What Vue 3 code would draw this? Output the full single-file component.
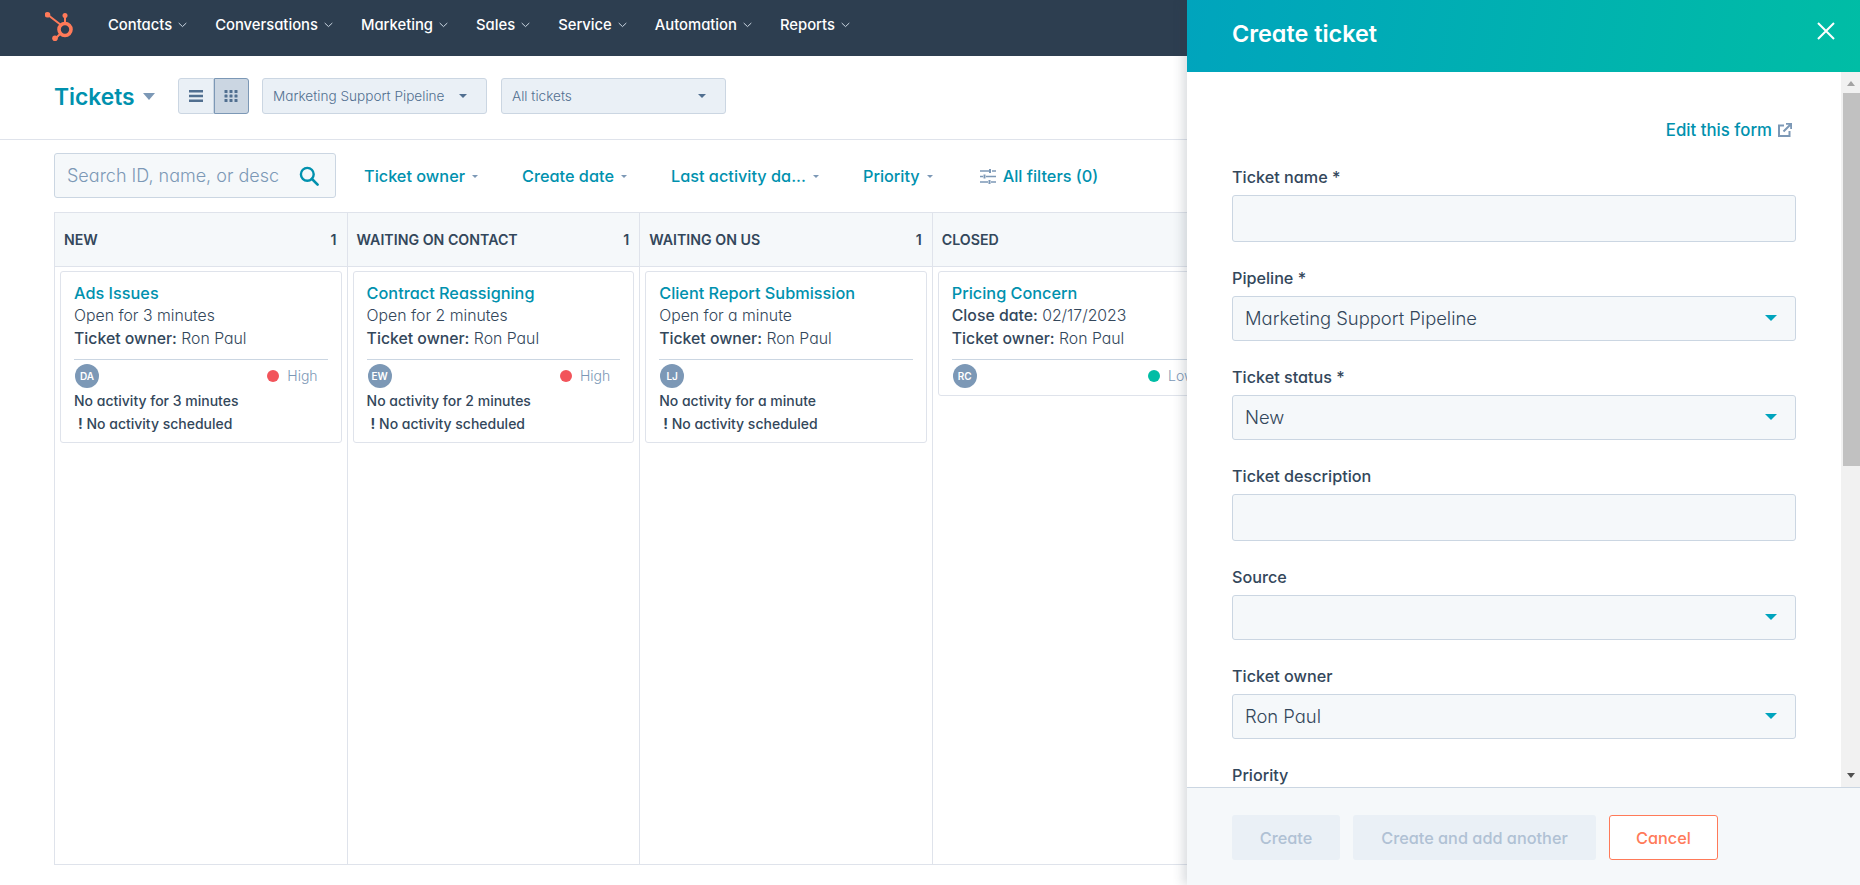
<script setup>
const navItems = ["Contacts", "Conversations", "Marketing", "Sales", "Service", "Automation", "Reports"];
const filters = ["Ticket owner", "Create date", "Last activity da...", "Priority"];

const columns = [
  {
    name: "NEW",
    count: 1,
    card: {
      title: "Ads Issues",
      open: "Open for 3 minutes",
      initials: "DA",
      priority: "High",
      idle: "No activity for 3 minutes",
    },
  },
  {
    name: "WAITING ON CONTACT",
    count: 1,
    card: {
      title: "Contract Reassigning",
      open: "Open for 2 minutes",
      initials: "EW",
      priority: "High",
      idle: "No activity for 2 minutes",
    },
  },
  {
    name: "WAITING ON US",
    count: 1,
    card: {
      title: "Client Report Submission",
      open: "Open for a minute",
      initials: "LJ",
      priority: "",
      idle: "No activity for a minute",
    },
  },
  {
    name: "CLOSED",
    count: 1,
    card: {
      title: "Pricing Concern",
      closeDate: "02/17/2023",
      initials: "RC",
      priority: "Low",
      idle: "",
    },
  },
];

const fields = [
  { label: "Ticket name *", type: "text", value: "" },
  { label: "Pipeline *", type: "select", value: "Marketing Support Pipeline" },
  { label: "Ticket status *", type: "select", value: "New" },
  { label: "Ticket description", type: "text", value: "" },
  { label: "Source", type: "select", value: "" },
  { label: "Ticket owner", type: "select", value: "Ron Paul" },
  { label: "Priority", type: "select", value: "" },
];
</script>

<template>
  <div class="page">
    <nav class="topnav">
      <svg class="logo" viewBox="45 12 30 32" width="30" height="32">
        <g fill="none" stroke="#ff7a59">
          <circle cx="65" cy="29.5" r="6" stroke-width="3.6" />
          <path d="M48 15l13 10M65 16v8M56 38l5-5" stroke-width="2" />
        </g>
        <g fill="#ff7a59">
          <circle cx="47.5" cy="14.8" r="2.8" />
          <circle cx="65" cy="15.5" r="2.5" />
          <circle cx="55" cy="38.3" r="2.8" />
        </g>
      </svg>
      <a v-for="item in navItems" :key="item" class="nav-item">
        {{ item }}
        <svg viewBox="0 0 9 6" width="9" height="6"><path d="M.7 1l3.8 3.6L8.3 1" fill="none" stroke="#cbd6e2" stroke-width="1" /></svg>
      </a>
    </nav>

    <header class="page-head">
      <h1 class="page-title">Tickets<span class="caret caret-title"></span></h1>
      <div class="view-toggle">
        <button type="button" class="toggle-btn">
          <svg viewBox="0 0 14 14" width="14" height="14"><path d="M0 1h14v2.6H0zM0 5.7h14v2.6H0zM0 10.4h14V13H0z" fill="#516f90" /></svg>
        </button>
        <button type="button" class="toggle-btn active">
          <svg viewBox="0 0 14 14" width="14" height="14" fill="#516f90">
            <template v-for="y in [1, 5.5, 10]" :key="y">
              <rect v-for="x in [0.5, 5.5, 10.5]" :key="x" :x="x" :y="y" width="3" height="3" rx=".6" />
            </template>
          </svg>
        </button>
      </div>
      <div class="head-select">Marketing Support Pipeline<span class="caret caret-small"></span></div>
      <div class="head-select">All tickets<span class="caret caret-small"></span></div>
    </header>

    <div class="filters">
      <div class="search">
        <span class="search-text">Search ID, name, or desc</span>
        <svg viewBox="0 0 20 20" width="20" height="20"><circle cx="8.3" cy="8.3" r="6.4" fill="none" stroke="#0091ae" stroke-width="2.4" /><path d="M13 13l5.6 5.6" stroke="#0091ae" stroke-width="2.6" stroke-linecap="round" /></svg>
      </div>
      <button v-for="f in filters" :key="f" type="button" class="filter-btn">
        {{ f }}<span class="caret caret-tiny"></span>
      </button>
      <button type="button" class="filter-btn all-filters">
        <svg viewBox="0 0 16 15" width="16" height="15"><path d="M0 2h9M12 2h4M0 7.500h3M6 7.500h10M0 13h8M11 13h5" stroke="#7c98b6" stroke-width="1.500" /><path d="M10 0v4M4.500 5.500v4M9.500 11v4" stroke="#7c98b6" stroke-width="2" /></svg>
        All filters (0)
      </button>
    </div>

    <section class="board">
      <div v-for="col in columns" :key="col.name" class="column">
        <div class="column-head">
          <span>{{ col.name }}</span>
          <span>{{ col.count }}</span>
        </div>
        <article class="card">
          <div class="card-top">
            <a class="card-title">{{ col.card.title }}</a>
            <p v-if="col.card.open">{{ col.card.open }}</p>
            <p v-if="col.card.closeDate"><b>Close date:</b> {{ col.card.closeDate }}</p>
            <p><b>Ticket owner:</b> Ron Paul</p>
          </div>
          <div class="card-meta">
            <span class="avatar">{{ col.card.initials }}</span>
            <span v-if="col.card.priority" class="priority">
              <i class="dot" :class="col.card.priority === 'High' ? 'dot-high' : 'dot-low'"></i>{{ col.card.priority }}
            </span>
          </div>
          <template v-if="col.card.idle">
            <p class="activity">{{ col.card.idle }}</p>
            <p class="activity scheduled"><b>!</b> No activity scheduled</p>
          </template>
        </article>
      </div>
    </section>

    <aside class="panel">
      <div class="panel-head">
        <h2>Create ticket</h2>
        <svg viewBox="0 0 18 18" width="18" height="18"><path d="M1 1l16 16M17 1L1 17" stroke="#fff" stroke-width="2" /></svg>
      </div>
      <div class="panel-scroll">
        <form class="panel-form" @submit.prevent>
          <a class="edit-link">
            Edit this form
            <svg viewBox="0 0 14 14" width="14" height="14"><path d="M6 2.500H1v10.500h10.500V8" fill="none" stroke="#7c98b6" stroke-width="2" /><path d="M5.500 8.500L12.500 1.500M8 .8h5.200V6" fill="none" stroke="#7c98b6" stroke-width="2" /></svg>
          </a>
          <div v-for="field in fields" :key="field.label" class="field">
            <label>{{ field.label }}</label>
            <div class="control" :class="field.type">
              <span>{{ field.value }}</span>
              <i v-if="field.type === 'select'" class="select-caret"></i>
            </div>
          </div>
        </form>
        <div class="scrollbar">
          <span class="arrow arrow-up"></span>
          <div class="thumb"></div>
          <span class="arrow arrow-down"></span>
        </div>
      </div>
      <div class="panel-foot">
        <button type="button" class="foot-btn disabled btn-create">Create</button>
        <button type="button" class="foot-btn disabled btn-another">Create and add another</button>
        <button type="button" class="foot-btn btn-cancel">Cancel</button>
      </div>
    </aside>
  </div>
</template>

<style>
html,
body {
  margin: 0;
  overflow: hidden;
  background: #fff;
}
</style>

<style scoped>
.page {
  position: relative;
  height: 885px;
  overflow: hidden;
  font-family: Inter, "Noto Sans", sans-serif;
  font-feature-settings: "cv11";
  color: #33475b;
}
p,
h1,
h2 {
  margin: 0;
}
button {
  font: inherit;
  font-feature-settings: inherit;
  border: none;
  background: none;
  padding: 0;
}

.topnav {
  height: 56px;
  background: #2d3e50;
  display: flex;
  align-items: center;
  padding-left: 45px;
}
.logo {
  margin-right: 33px;
}
.nav-item {
  display: flex;
  align-items: center;
  gap: 6px;
  margin-right: 28px;
  padding-bottom: 6px;
  color: #fff;
  font-size: 14.800px;
  font-weight: 500;
}

.page-head {
  height: 84px;
  box-sizing: border-box;
  padding: 0 0 3px 54px;
  border-bottom: 1px solid #dfe3eb;
  display: flex;
  align-items: center;
}
.page-title {
  display: flex;
  align-items: center;
  width: 124px;
  padding-top: 1px;
  font-size: 22.800px;
  font-weight: 600;
  color: #0091ae;
}
.caret {
  display: inline-block;
  width: 0;
  height: 0;
  border-left: 6px solid transparent;
  border-right: 6px solid transparent;
  border-top: 6px solid #7c98b6;
}
.caret-title {
  margin-left: 8px;
  border-top-width: 7px;
}
.caret-small {
  border-width: 4px 4px 0;
  border-top-color: #516f90;
}
.caret-tiny {
  border-width: 3.500px 3.500px 0;
  border-top-color: #7c98b6;
  margin-left: 7px;
}
.view-toggle {
  display: flex;
  width: 71px;
  height: 36px;
  margin-right: 13px;
}
.toggle-btn {
  flex: 1;
  display: flex;
  align-items: center;
  justify-content: center;
  background: #eaf0f6;
  border: 1px solid #cbd6e2;
  border-radius: 3px 0 0 3px;
}
.toggle-btn.active {
  background: #cbd6e2;
  border-color: #7c98b6;
  border-radius: 0 3px 3px 0;
}
.head-select {
  width: 225px;
  height: 36px;
  box-sizing: border-box;
  margin-right: 14px;
  padding: 0 19px 0 10px;
  display: flex;
  align-items: center;
  justify-content: space-between;
  background: #eaf0f6;
  border: 1px solid #cbd6e2;
  border-radius: 3px;
  font-size: 13.600px;
  font-weight: 300;
  color: #516f90;
}

.filters {
  height: 72px;
  box-sizing: border-box;
  padding: 13px 0 0 54px;
  display: flex;
  align-items: flex-start;
  gap: 44px;
}
.search {
  width: 282px;
  height: 45px;
  box-sizing: border-box;
  margin-right: -16px;
  padding: 0 16px 0 12px;
  display: flex;
  align-items: center;
  justify-content: space-between;
  background: #f5f8fa;
  border: 1px solid #cbd6e2;
  border-radius: 3px;
}
.search-text {
  font-size: 18px;
  font-weight: 300;
  color: #7c98b6;
}
.filter-btn {
  height: 45px;
  padding-top: 1px;
  display: flex;
  align-items: center;
  font-size: 16.300px;
  font-weight: 500;
  color: #0091ae;
}
.all-filters {
  margin-left: 3px;
}
.all-filters svg {
  margin-right: 7px;
}

.board {
  display: grid;
  grid-template-columns: repeat(4, 292.600px) 1fr;
  height: 653px;
  margin: 0 54px;
  box-sizing: border-box;
  border: 1px solid #dfe3eb;
}
.column {
  border-right: 1px solid #dfe3eb;
  min-width: 0;
}
.column-head {
  height: 54px;
  box-sizing: border-box;
  padding: 0 10px 0 9px;
  display: flex;
  align-items: center;
  justify-content: space-between;
  background: #f5f8fa;
  border-bottom: 1px solid #dfe3eb;
  font-size: 14.200px;
  font-weight: 600;
}
.card {
  margin: 4px 5px 0 5px;
  padding: 9px 13px 6.500px;
  background: #fff;
  border: 1px solid #dfe3eb;
  border-radius: 3px;
  font-size: 15.800px;
  line-height: 22.500px;
}
.card-top {
  padding-bottom: 8.500px;
  border-bottom: 1px solid #cbd6e2;
  font-weight: 300;
}
.card-top b {
  font-weight: 500;
}
.card-title {
  display: block;
  line-height: 24px;
  font-size: 16.300px;
  font-weight: 500;
  color: #0091ae;
}
.card-meta {
  display: flex;
  align-items: center;
  justify-content: space-between;
  height: 24px;
  margin-top: 4.500px;
  padding: 0 10px 0 1px;
}
.avatar {
  width: 24px;
  height: 24px;
  border-radius: 50%;
  background: #7c98b6;
  color: #fff;
  font-size: 10px;
  font-weight: 600;
  display: flex;
  align-items: center;
  justify-content: center;
}
.priority {
  display: flex;
  align-items: center;
  gap: 8px;
  color: #7c98b6;
  font-size: 14px;
  font-weight: 300;
}
.dot {
  width: 12px;
  height: 12px;
  border-radius: 50%;
}
.dot-high {
  background: #f2545b;
}
.dot-low {
  background: #00bda5;
}
.activity {
  margin-top: 1.750px;
  font-size: 14px;
  font-weight: 500;
}
.scheduled {
  margin-top: 1px;
  padding-left: 4px;
}

.panel {
  position: absolute;
  top: 0;
  right: 0;
  bottom: 0;
  width: 673px;
  display: flex;
  flex-direction: column;
  background: #fff;
  box-shadow: -4px 0 10px rgba(45, 62, 80, 0.18);
}
.panel-head {
  height: 72px;
  flex-shrink: 0;
  box-sizing: border-box;
  padding: 0 25px 5px 45px;
  display: flex;
  align-items: center;
  justify-content: space-between;
  background: linear-gradient(100deg, #00a4bd, #00bda5);
  color: #fff;
}
.panel-head h2 {
  font-size: 23.400px;
  font-weight: 600;
}
.panel-head svg {
  margin-bottom: 5px;
}
.panel-scroll {
  flex: 1;
  min-height: 0;
  display: flex;
}
.panel-form {
  flex: 1;
  min-width: 0;
  overflow: hidden;
  padding: 45px 45px 0 45px;
}
.edit-link {
  display: flex;
  justify-content: flex-end;
  align-items: center;
  gap: 6px;
  height: 26px;
  margin-bottom: 22px;
  margin-right: 4px;
  color: #0091ae;
  font-size: 16.800px;
  font-weight: 500;
}
.field {
  margin-bottom: 24.200px;
}
.field label {
  display: block;
  height: 24px;
  line-height: 25px;
  margin-bottom: 6px;
  font-size: 16.200px;
  font-weight: 500;
}
.control {
  box-sizing: border-box;
  height: 45px;
  padding: 0 18px 0 12px;
  display: flex;
  align-items: center;
  justify-content: space-between;
  background: #f5f8fa;
  border: 1px solid #cbd6e2;
  border-radius: 3px;
  font-size: 18.400px;
  font-weight: 300;
}
.control.text {
  height: 46.500px;
}
.select-caret {
  width: 0;
  height: 0;
  border-left: 6px solid transparent;
  border-right: 6px solid transparent;
  border-top: 6px solid #00a4bd;
}

.scrollbar {
  width: 19px;
  flex-shrink: 0;
  display: flex;
  flex-direction: column;
  align-items: flex-end;
  background: #f1f1f1;
}
.thumb {
  width: 17px;
  height: 373px;
  margin-bottom: auto;
  background: #c1c1c1;
}
.arrow {
  width: 0;
  height: 0;
  border-left: 4px solid transparent;
  border-right: 4px solid transparent;
  margin-right: 5px;
}
.arrow-up {
  margin-top: 9px;
  margin-bottom: 7px;
  border-bottom: 5px solid #a3a3a3;
}
.arrow-down {
  margin-bottom: 9px;
  border-top: 5px solid #505050;
}

.panel-foot {
  height: 98px;
  flex-shrink: 0;
  box-sizing: border-box;
  padding: 27px 0 0 45px;
  display: flex;
  align-items: flex-start;
  gap: 13px;
  background: #f5f8fa;
  border-top: 1px solid #cbd6e2;
}
.foot-btn {
  height: 45px;
  border-radius: 3px;
  font-size: 16.300px;
  font-weight: 500;
}
.foot-btn.disabled {
  background: #eaf0f6;
  color: #b0c1d4;
}
.btn-create {
  width: 108px;
}
.btn-another {
  width: 243px;
}
.btn-cancel {
  width: 109px;
  background: #fff;
  border: 1px solid #ff7a59;
  color: #ff7a59;
}
</style>
